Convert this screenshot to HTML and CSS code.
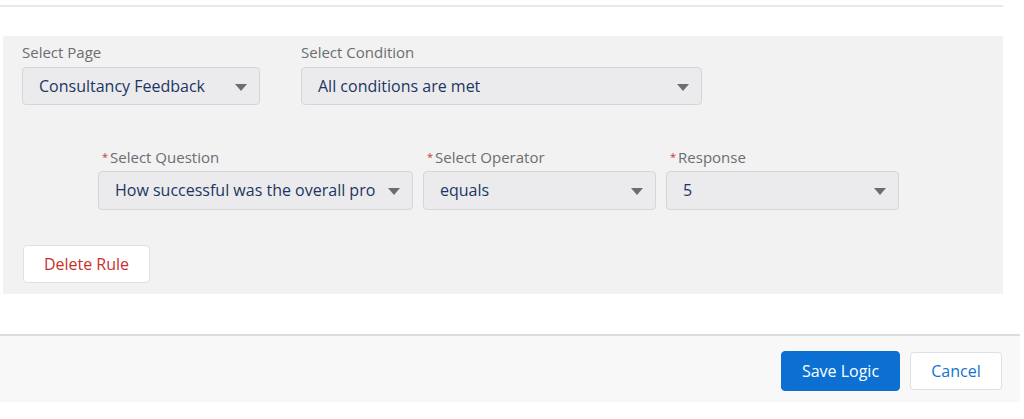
FILE: index.html
```html
<!DOCTYPE html>
<html lang="en">
<head>
  <meta charset="UTF-8">
  <title>Logic Rule</title>
  <link rel="stylesheet" href="styles.css">
</head>
<body>

  <div class="ust-cizgi"></div>

  <div class="kural-paneli">
    <div class="satir">
      <div class="alan alan-sayfa">
        <label>Select Page</label>
        <div class="secim">Consultancy Feedback<span class="ok"></span></div>
      </div>
      <div class="alan alan-kosul">
        <label>Select Condition</label>
        <div class="secim">All conditions are met<span class="ok"></span></div>
      </div>
    </div>

    <div class="satir kosul-satiri">
      <div class="alan alan-soru">
        <label><abbr>*</abbr>Select Question</label>
        <div class="secim">How successful was the overall pro<span class="ok"></span></div>
      </div>
      <div class="alan alan-operator">
        <label><abbr>*</abbr>Select Operator</label>
        <div class="secim">equals<span class="ok"></span></div>
      </div>
      <div class="alan alan-cevap">
        <label><abbr>*</abbr>Response</label>
        <div class="secim">5<span class="ok"></span></div>
      </div>
    </div>

    <button class="sil-btn">Delete Rule</button>
  </div>

  <div class="alt-bar">
    <button class="kaydet-btn">Save Logic</button>
    <button class="iptal-btn">Cancel</button>
  </div>

</body>
</html>
```

FILE: styles.css
```css
body {
  margin: 0;
  background: #fff;
  font-family: "Open Sans", "Lato", sans-serif;
}

/* Üst çizgi */
.ust-cizgi {
  height: 2px;
  background: #e9e9ea;
  margin: 5px 21px 0 0;
}

/* Gri panel */
.kural-paneli {
  background: #f3f2f2;
  margin: 29px 21px 0 3px;
  padding: 7px 0 11px 19px;
}

.satir {
  display: flex;
  gap: 41px;
}

.kosul-satiri {
  margin-top: 43px;
  padding-left: 76px;
  gap: 10px;
}

.alan label {
  display: block;
  font-size: 15px;
  line-height: 18px;
  color: #6b6d70;
  margin-bottom: 6px;
}

.kosul-satiri .alan label {
  margin-bottom: 5px;
}

.alan label abbr {
  color: #c23934;
  text-decoration: none;
  font-size: 11px;
  vertical-align: top;
  margin-right: 2px;
  margin-left: 4px;
}

.secim {
  position: relative;
  box-sizing: border-box;
  height: 38px;
  line-height: 36px;
  background: #ebebed;
  border: 1px solid #d5d6da;
  border-radius: 4px;
  padding: 0 16px;
  font-size: 16px;
  color: #1c3661;
  white-space: nowrap;
}

.kosul-satiri .secim {
  height: 39px;
  line-height: 37px;
}

.ok {
  position: absolute;
  right: 12px;
  top: 16px;
  width: 0;
  height: 0;
  border-left: 6px solid transparent;
  border-right: 6px solid transparent;
  border-top: 7px solid #6d6d6e;
}

.alan-sayfa { width: 238px; }
.alan-kosul { width: 401px; }
.alan-soru { width: 315px; }
.alan-operator { width: 233px; }
.alan-cevap { width: 233px; }

/* Butonlar */
.sil-btn {
  display: block;
  margin-top: 35px;
  margin-left: 1px;
  width: 127px;
  height: 38px;
  background: #fff;
  border: 1px solid #dfe0e4;
  border-radius: 4px;
  color: #c9302c;
  font-family: inherit;
  font-size: 16px;
  cursor: pointer;
}

.alt-bar {
  margin-top: 40px;
  margin-right: 4px;
  border-top: 2px solid #dcdcde;
  background: #f8f8f8;
  height: 68px;
  display: flex;
  justify-content: flex-end;
  align-items: flex-start;
  gap: 10px;
  padding: 15px 18px 0 0;
  box-sizing: border-box;
}

.kaydet-btn {
  width: 119px;
  height: 40px;
  background: #0b70d2;
  border: 1px solid #0b70d2;
  border-radius: 4px;
  color: #fff;
  font-family: inherit;
  font-size: 16px;
}

.iptal-btn {
  margin-top: 1px;
  width: 92px;
  height: 38px;
  background: #fff;
  border: 1px solid #dcdfe4;
  border-radius: 4px;
  color: #1273cf;
  font-family: inherit;
  font-size: 16px;
}
```
